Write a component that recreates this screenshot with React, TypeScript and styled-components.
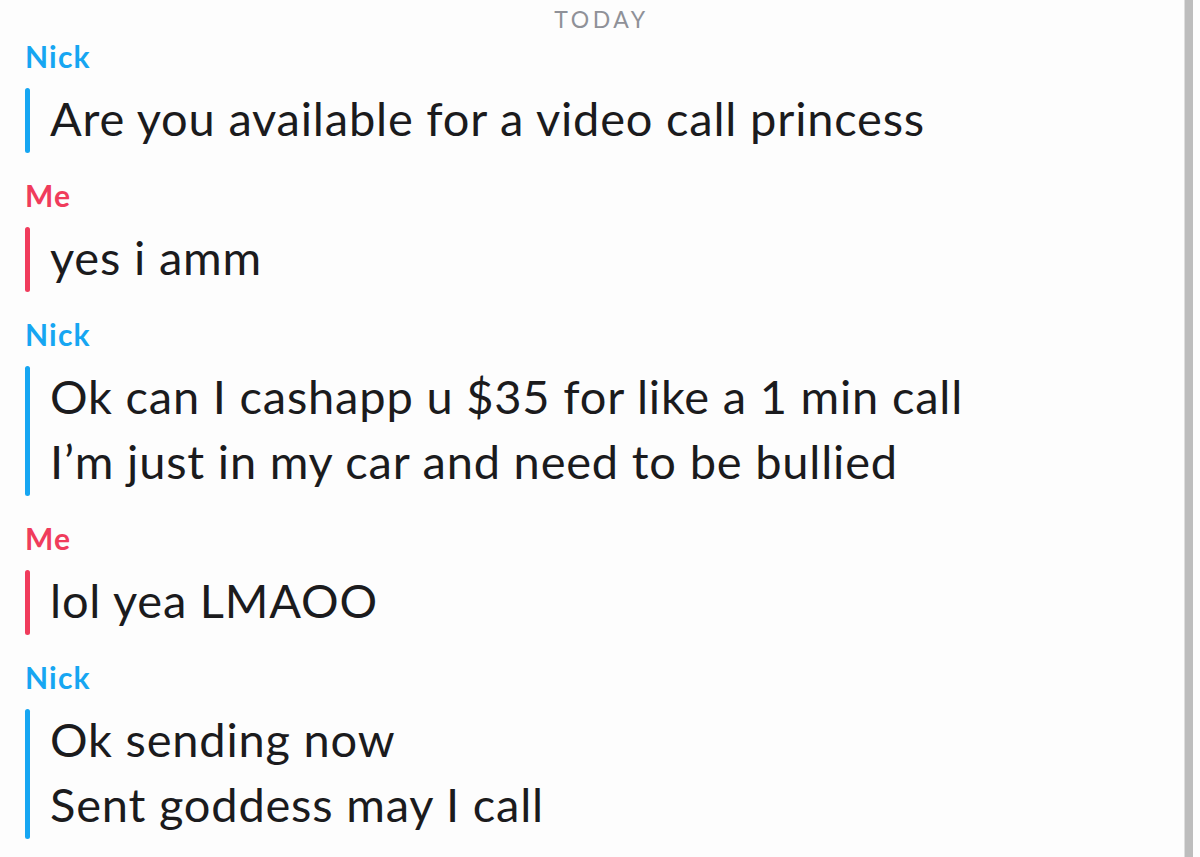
import React from "react";
import styled, { createGlobalStyle } from "styled-components";

type Sender = "nick" | "me";

type Block = {
  from: Sender;
  lines: string[];
};

const blocks: Block[] = [
  { from: "nick", lines: ["Are you available for a video call princess"] },
  { from: "me", lines: ["yes i amm"] },
  {
    from: "nick",
    lines: [
      "Ok can I cashapp u $35 for like a 1 min call",
      "I\u2019m just in my car and need to be bullied",
    ],
  },
  { from: "me", lines: ["lol yea LMAOO"] },
  { from: "nick", lines: ["Ok sending now", "Sent goddess may I call"] },
];

const colors: Record<Sender, string> = {
  nick: "#16a6f2",
  me: "#f03c5c",
};

const names: Record<Sender, string> = {
  nick: "Nick",
  me: "Me",
};

export default function App() {
  return (
    <>
      <GlobalStyle />
      <Screen>
        <Chat>
          <DateHeader>TODAY</DateHeader>
          {blocks.map((block, i) => (
            <MessageGroup key={i}>
              <SenderName $color={colors[block.from]}>
                {names[block.from]}
              </SenderName>
              <MessageBody>
                <Bar $color={colors[block.from]} />
                <Lines>
                  {block.lines.map((line, j) => (
                    <Line key={j}>{line}</Line>
                  ))}
                </Lines>
              </MessageBody>
            </MessageGroup>
          ))}
        </Chat>
        <ScrollTrack />
      </Screen>
    </>
  );
}

const GlobalStyle = createGlobalStyle`
  html, body {
    margin: 0;
    padding: 0;
    background: #fdfdfd;
  }
  body {
    font-family: Lato, "Noto Sans", sans-serif;
    color: #1b1b1d;
  }
`;

const Screen = styled.div`
  display: flex;
  width: 1200px;
  height: 857px;
  overflow: hidden;
  background: #fdfdfd;
`;

const Chat = styled.div`
  flex: 1;
  display: flex;
  flex-direction: column;
  padding-left: 25px;
`;

const DateHeader = styled.div`
  height: 46px;
  margin: 0 -15px 0 -25px;
  padding-left: 4px;
  font-size: 23px;
  line-height: 38px;
  letter-spacing: 3.6px;
  text-align: center;
  color: #8f9198;
`;

const MessageGroup = styled.div`
  display: flex;
  flex-direction: column;
  margin-bottom: 24px;
`;

const SenderName = styled.div<{ $color: string }>`
  height: 36px;
  margin-bottom: 14px;
  font-size: 30px;
  line-height: 36px;
  font-weight: 700;
  letter-spacing: 1.2px;
  color: ${(p) => p.$color};
`;

const MessageBody = styled.div`
  display: flex;
  align-items: stretch;
`;

const Bar = styled.div<{ $color: string }>`
  width: 5px;
  border-radius: 3px;
  background: ${(p) => p.$color};
`;

const Lines = styled.div`
  display: flex;
  flex-direction: column;
  margin: -2px 0 2px 20px;
`;

const Line = styled.div`
  font-size: 47px;
  line-height: 65px;
  letter-spacing: 0.8px;
  white-space: nowrap;
`;

const ScrollTrack = styled.div`
  width: 8px;
  margin-right: 7px;
  background: #bdbdbd;
  border-left: 1px solid #dedede;
`;
